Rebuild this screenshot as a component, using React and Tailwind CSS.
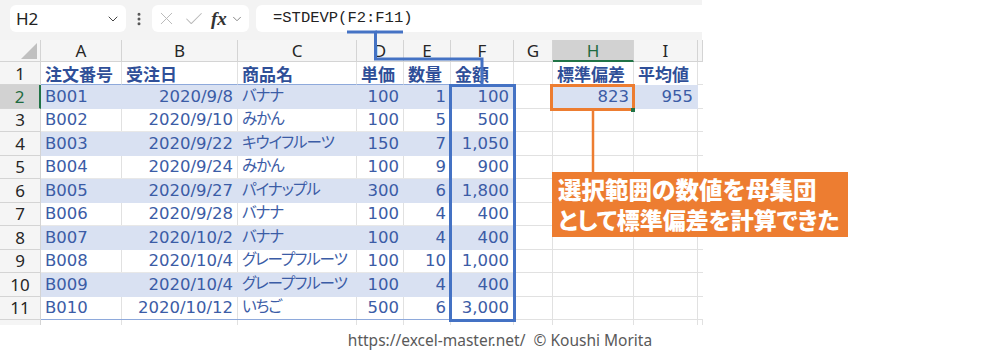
import {ChevronDown, X, Check, EllipsisVertical} from 'lucide-react'

const cols = ['A', 'B', 'C', 'D', 'E', 'F', 'G', 'H', 'I', '']

const orders = [
	['B001', '2020/9/8', 'バナナ', 100, 1, '100'],
	['B002', '2020/9/10', 'みかん', 100, 5, '500'],
	['B003', '2020/9/22', 'キウイフルーツ', 150, 7, '1,050'],
	['B004', '2020/9/24', 'みかん', 100, 9, '900'],
	['B005', '2020/9/27', 'パイナップル', 300, 6, '1,800'],
	['B006', '2020/9/28', 'バナナ', 100, 4, '400'],
	['B007', '2020/10/2', 'バナナ', 100, 4, '400'],
	['B008', '2020/10/4', 'グレープフルーツ', 100, 10, '1,000'],
	['B009', '2020/10/4', 'グレープフルーツ', 100, 4, '400'],
	['B010', '2020/10/12', 'いちご', 500, 6, '3,000'],
]

const gridCols = 'grid grid-cols-[41px_81px_116px_119px_47px_47px_63px_39px_81px_64px_5px]'
// Meiryo-ish: Verdana-like latin + proportional kana
const cellFont = "font-['DejaVu_Sans','Noto_Sans_CJK_JP',sans-serif] [font-feature-settings:'palt'] text-[16.5px] leading-none"

function classNames(...classes) {
	return classes.filter(Boolean).join(' ')
}

function Cell({children, right, band, kana}) {
	return <div className={classNames(
		'flex items-center px-[4px] overflow-visible whitespace-nowrap border-r',
		right ? 'justify-end' : 'justify-start',
		band ? 'bg-[#d9e1f2] border-[#d9e1f2]' : 'bg-white border-[#e1e1e1]',
		kana && 'text-[15.5px] tracking-[-1px]',
		'text-[#3b5ca6]'
	)}>
		{children}
	</div>
}

function HeadCell({children, line}) {
	return <div className={classNames(
		"flex items-center px-[4px] bg-white font-bold text-[#2f4f98] border-r border-[#e1e1e1] font-['Noto_Sans_CJK_JP',sans-serif] text-[17px] leading-none",
		line && 'border-b border-b-[#8ea9db]'
	)}>{children}</div>
}

function RowHead({n, active}) {
	return <div className={classNames(
		"flex items-center justify-center text-[17px] leading-none border-b border-[#d4d4d4] font-['Noto_Sans',sans-serif]",
		active ? 'bg-[#d2d2d2] text-[#1e6b41] border-r-2 border-r-[#217346]' : 'bg-[#f5f5f5] text-[#262626] border-r border-r-[#d4d4d4]'
	)}>
		{n}
	</div>
}

function FormulaBar() {
	return <div className="h-[40px] bg-[#f3f3f3] flex items-start pt-[5px] pl-[10px] font-['Noto_Sans',sans-serif]">
		<div className="w-[116px] h-[27px] bg-white rounded-md flex items-center justify-between pl-[6px] pr-[5px] text-[17px] text-[#222]">
			<span>H2</span>
			<ChevronDown className="w-4 h-4 text-[#444]" strokeWidth={1.5}/>
		</div>
		<div className="w-[26px] h-[27px] flex items-center justify-center">
			<EllipsisVertical className="w-4 h-4 text-[#555]" strokeWidth={2.5}/>
		</div>
		<div className="w-[97px] h-[27px] bg-white rounded-md flex items-center pl-[4px] gap-[6px]">
			<X className="w-[21px] h-[21px] text-[#b8b8b8]" strokeWidth={1.1}/>
			<Check className="w-[22px] h-[22px] text-[#b8b8b8]" strokeWidth={1.1}/>
			<span className="font-['Liberation_Serif',serif] italic font-bold text-[19px] text-[#333] leading-none">fx</span>
			<ChevronDown className="w-[14px] h-[14px] text-[#777] -ml-[3px]" strokeWidth={1.5}/>
		</div>
		<div className="ml-[7px] flex-1 h-[27px] bg-white rounded-l-md flex items-center pl-[17px] font-['Liberation_Mono',monospace] text-[15.5px] text-[#222]">
			=STDEVP(F2:F11)
		</div>
	</div>
}

function ColumnHeaders() {
	return <div className={gridCols + " h-[22px] font-['Noto_Sans',sans-serif] text-[17px] leading-none"}>
		<div className="bg-[#f5f5f5] border-r border-b border-[#d4d4d4] flex items-end justify-end pr-[3px] pb-[2px]">
			<svg width="16" height="16" viewBox="0 0 16 16"><polygon points="16,0 16,16 0,16" fill="#c0c0c0"/></svg>
		</div>
		{cols.map((c, i) => <div key={i} className={classNames(
			'flex items-center justify-center border-r border-[#d4d4d4]',
			c === 'H' ? 'bg-[#d2d2d2] text-[#1e6b41] border-b-2 border-b-[#217346]' : 'bg-[#f5f5f5] text-[#262626] border-b border-b-[#d4d4d4]'
		)}>{c}</div>)}
	</div>
}

export default function App() {
	return (
		<div className="relative w-[1000px] h-[350px] bg-white overflow-hidden font-['Noto_Sans_CJK_JP',sans-serif]">
			<div className="w-[702px]">
				<FormulaBar/>
				<ColumnHeaders/>

				{/* header row of the table */}
				<div className={gridCols + ' h-[23px]'}>
					<RowHead n="1"/>
					{['注文番号', '受注日', '商品名', '単価', '数量', '金額'].map(t => <HeadCell key={t} line>{t}</HeadCell>)}
					<div className="bg-white border-r border-b border-[#e1e1e1]"></div>
					<HeadCell>標準偏差</HeadCell>
					<HeadCell>平均値</HeadCell>
					<div className="bg-white border-b border-[#e1e1e1]"></div>
				</div>

				{orders.map((r, i) => {
					const band = i % 2 === 0
					const lastRow = i === orders.length - 1
					return <div key={r[0]} className={gridCols + ' h-[23.5px] ' + cellFont}>
						<RowHead n={i + 2} active={i === 0}/>
						<div className={classNames('col-span-6 grid grid-cols-[81px_116px_119px_47px_47px_63px]', lastRow ? 'border-b border-[#8ea9db]' : band ? '' : 'border-b border-[#e8e8e8]')}>
							<Cell band={band}>{r[0]}</Cell>
							<Cell band={band} right>{r[1]}</Cell>
							<Cell band={band} kana>{r[2]}</Cell>
							<Cell band={band} right>{r[3]}</Cell>
							<Cell band={band} right>{r[4]}</Cell>
							<Cell band={band} right>{r[5]}</Cell>
						</div>
						<div className="bg-white border-r border-b border-[#e1e1e1]"></div>
						{i === 0
							? <><Cell band right>823</Cell><Cell band right>955</Cell></>
							: <><div className="bg-white border-r border-b border-[#e1e1e1]"></div><div className="bg-white border-r border-b border-[#e1e1e1]"></div></>}
						<div className="bg-white border-b border-[#e1e1e1]"></div>
					</div>
				})}
				<div className={gridCols + ' h-[5px]'}>
					<div className="bg-[#f5f5f5] border-r border-[#d4d4d4]"></div>
					{cols.map((c, i) => <div key={i} className="bg-white border-r border-[#e1e1e1]"></div>)}
				</div>
			</div>

			<p className="mt-[5px] text-center text-[15.5px] leading-[20px] text-[#5a5a5a] font-['Noto_Sans',sans-serif]">
				https://excel-master.net/&nbsp; © Koushi Morita
			</p>

			{/* annotations on top of the sheet */}
			<svg className="absolute left-0 top-0 pointer-events-none" width="1000" height="350">
				<polyline points="347,32 375.5,32 375.5,59 482,59 482,86" fill="none" stroke="#4472c4" strokeWidth="3"/>
				<line x1="375.5" y1="32" x2="403" y2="32" stroke="#4472c4" strokeWidth="3"/>
				<line x1="593" y1="110" x2="593" y2="173" stroke="#ed7d31" strokeWidth="2.5"/>
			</svg>
			<div className="absolute left-[449px] top-[84px] w-[67px] h-[238px] border-[3px] border-[#4472c4]"></div>
			<div className="absolute left-[550px] top-[84px] w-[85px] h-[27px] border-[3px] border-[#ed7d31]"></div>
			<div className="absolute left-[631px] top-[108px] w-[4px] h-[4px] bg-[#217346]"></div>
			<div className="absolute left-[552px] top-[172px] w-[296px] h-[65px] bg-[#ed7d31] pl-[6px] pt-[2px] text-white font-black leading-[30px] whitespace-nowrap">
				<p className="text-[23.5px]">選択範囲の数値を母集団</p>
				<p className="text-[23px] [font-feature-settings:'palt']">として標準偏差を計算できた</p>
			</div>
		</div>
	)
}
